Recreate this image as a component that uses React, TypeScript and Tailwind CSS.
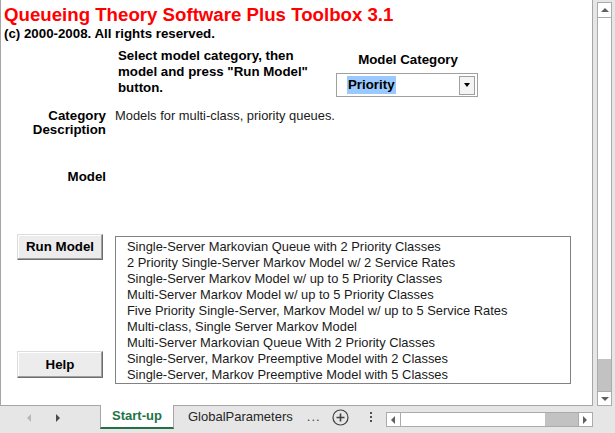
import React from "react";

const models = [
  "Single-Server Markovian Queue with 2 Priority Classes",
  "2 Priority Single-Server Markov Model w/ 2 Service Rates",
  "Single-Server Markov Model w/ up to 5 Priority Classes",
  "Multi-Server Markov Model w/ up to 5 Priority Classes",
  "Five Priority Single-Server, Markov Model w/ up to 5 Service Rates",
  "Multi-class, Single Server Markov Model",
  "Multi-Server Markovian Queue With 2 Priority Classes",
  "Single-Server, Markov Preemptive Model with 2 Classes",
  "Single-Server, Markov Preemptive Model with 5 Classes",
];

const SheetButton: React.FC<{ label: string; className?: string }> = ({ label, className }) => (
  <button
    className={
      "w-[86px] h-[26px] bg-[#ececec] border border-t-[#dcdcdc] border-l-[#dcdcdc] border-r-[#6e6e6e] border-b-[#6e6e6e] shadow-[inset_-1px_-1px_0_#a0a0a0,inset_1px_1px_0_#ffffff] text-[13.3px] font-bold text-black " +
      (className ?? "")
    }
  >
    {label}
  </button>
);

const VScroll: React.FC = () => (
  <div className="w-[22px] h-full bg-[#e6e6e6] pl-[4px] pt-[2px]">
    <div className="w-[15px] h-[404px] border border-[#ababab] bg-white flex flex-col">
      <div className="h-[15px] border-b border-[#ababab] flex items-center justify-center">
        <div className="w-0 h-0 border-l-[4px] border-r-[4px] border-b-[4px] border-l-transparent border-r-transparent border-b-[#606060]" />
      </div>
      <div className="flex-1" />
      <div className="h-[32px] bg-[#c2c2c2]" />
      <div className="h-[14px] border-t border-[#ababab] flex items-center justify-center">
        <div className="w-0 h-0 border-l-[4px] border-r-[4px] border-t-[4px] border-l-transparent border-r-transparent border-t-[#606060]" />
      </div>
    </div>
  </div>
);

const TabBar: React.FC = () => (
  <div className="flex items-start h-[27px] bg-[#e6e6e6] font-['Liberation_Sans',Arial,sans-serif] text-[13px]">
    <div className="w-[100px] flex items-center h-[24px] pl-[27px] gap-[25px]">
      <div className="w-0 h-0 border-t-[4px] border-b-[4px] border-r-[4px] border-t-transparent border-b-transparent border-r-[#b8b8b8]" />
      <div className="w-0 h-0 border-t-[4px] border-b-[4px] border-l-[4px] border-t-transparent border-b-transparent border-l-[#4a4a4a]" />
    </div>
    <div className="-mt-px h-[24px] w-[74px] bg-white border-l border-r border-[#a6a6a6] border-b-2 border-b-[#217346] flex items-center justify-center font-bold text-[#217346]">
      Start-up
    </div>
    <div className="h-[22px] pl-[14px] pr-[9px] flex items-center text-[#262626]">GlobalParameters</div>
    <div className="h-[22px] flex items-center pl-[5px] text-[#404040] tracking-[1px]">...</div>
    <div className="h-[22px] flex items-center pl-[11px]">
      <svg width="17" height="17" viewBox="0 0 17 17">
        <circle cx="8.5" cy="8.5" r="7.5" fill="none" stroke="#404040" strokeWidth="1.2" />
        <path d="M8.5 4.5v8M4.5 8.5h8" stroke="#404040" strokeWidth="1.6" />
      </svg>
    </div>
    <div className="h-[22px] flex flex-col items-center justify-center gap-[2px] pl-[21px] pr-[14px]">
      <div className="w-[2px] h-[2px] bg-[#505050]" />
      <div className="w-[2px] h-[2px] bg-[#505050]" />
      <div className="w-[2px] h-[2px] bg-[#505050]" />
    </div>
    <div className="mt-[6px] w-[207px] h-[15px] border border-[#ababab] bg-white flex">
      <div className="w-[14px] border-r border-[#ababab] flex items-center justify-center">
        <div className="w-0 h-0 border-t-[4px] border-b-[4px] border-r-[4px] border-t-transparent border-b-transparent border-r-[#606060]" />
      </div>
      <div className="flex-1" />
      <div className="w-[33px] bg-[#c2c2c2]" />
      <div className="w-[14px] border-l border-[#ababab] flex items-center justify-center">
        <div className="w-0 h-0 border-t-[4px] border-b-[4px] border-l-[4px] border-t-transparent border-b-transparent border-l-[#606060]" />
      </div>
    </div>
  </div>
);

const App: React.FC = () => {
  return (
    <div className="w-[615px] h-[433px] overflow-hidden flex flex-col bg-[#e6e6e6] font-['Liberation_Sans',Arial,sans-serif] text-black">
      <div className="flex h-[406px]">
        <div className="w-[593px] h-full bg-white border-l border-r border-b border-[#a6a6a6] flex flex-col">
          <div className="pl-[3px] pt-[3px] text-[18.67px] leading-[23px] font-bold text-[#ff0000]">
            Queueing Theory Software Plus Toolbox 3.1
          </div>
          <div className="pl-[3px] text-[13.3px] leading-[15px] font-bold">
            (c) 2000-2008. All rights reserved.
          </div>

          <div className="flex mt-[7px]">
            <div className="pl-[117px] w-[335px] text-[13.3px] leading-[16px] font-bold">
              Select model category, then
              <br />
              model and press "Run Model"
              <br />
              button.
            </div>
            <div className="w-[142px] flex flex-col pt-[4px]">
              <div className="text-[13.3px] leading-[16px] font-bold text-center pl-[2px]">Model Category</div>
              <div className="mt-[5px] h-[24px] border border-[#a0a0a0] flex items-center pl-[10px] pr-[2px]">
                <span className="bg-[#99c9ff] h-[18px] leading-[18px] text-[13.3px] font-bold px-[1px]">Priority</span>
                <div className="flex-1" />
                <div className="w-[16px] h-[19px] border border-[#a0a0a0] bg-[#f4f4f4] flex items-center justify-center">
                  <div className="w-0 h-0 border-l-[3px] border-r-[3px] border-t-[4px] border-l-transparent border-r-transparent border-t-black" />
                </div>
              </div>
            </div>
          </div>

          <div className="flex mt-[12px] text-[12.9px] leading-[14px]">
            <div className="w-[105px] text-right font-bold text-[13.3px]">
              Category
              <br />
              Description
            </div>
            <div className="pl-[9px] text-[#1a1a1a]">Models for multi-class, priority queues.</div>
          </div>

          <div className="flex mt-[33px] text-[13.3px] leading-[14px]">
            <div className="w-[105px] text-right font-bold">Model</div>
          </div>

          <div className="flex mt-[50px]">
            <div className="w-[114px] pl-[16px] flex flex-col">
              <SheetButton label="Run Model" />
              <SheetButton label="Help" className="mt-[91px] h-[27px]" />
            </div>
            <div className="mt-[2px] w-[456px] h-[148px] border border-[#828282] pl-[11px] pt-[2px] text-[12.9px] leading-[16px] text-[#1a1a1a] overflow-hidden">
              {models.map((m) => (
                <div key={m} className="whitespace-nowrap">
                  {m}
                </div>
              ))}
            </div>
          </div>
        </div>
        <VScroll />
      </div>
      <TabBar />
    </div>
  );
};

export default App;
